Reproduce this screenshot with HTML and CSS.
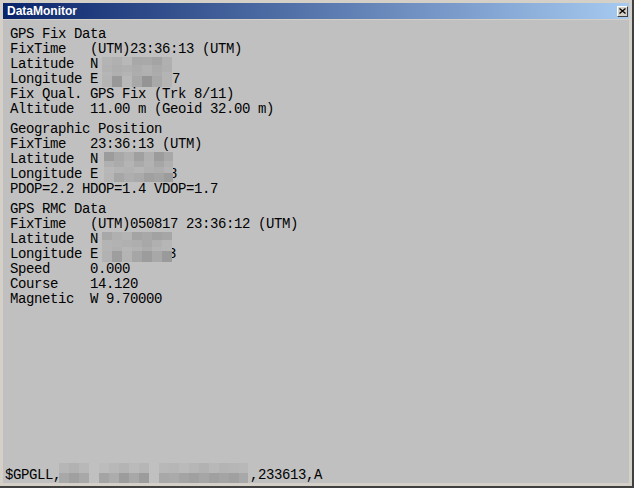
FILE: index.html
```html
<!DOCTYPE html>
<html>
<head>
<meta charset="utf-8">
<link rel="stylesheet" href="styles.css">
</head>
<body>
<div class="window">
  <div class="titlebar">
    <span class="title">DataMonitor</span>
    <span class="close"><svg width="7" height="6" viewBox="0 0 7 6"><path d="M0.5 0.5 L6.5 5.5 M6.5 0.5 L0.5 5.5" stroke="#000" stroke-width="1.3"/></svg></span>
  </div>
  <div class="content">
    <div class="section">
      <div class="line">GPS Fix Data</div>
      <div class="line">FixTime   (UTM)23:36:13 (UTM)</div>
      <div class="line">Latitude  N<span class="blur b1"></span></div>
      <div class="line">Longitude E<span class="blur b2"></span>7</div>
      <div class="line">Fix Qual. GPS Fix (Trk 8/11)</div>
      <div class="line">Altitude  11.00 m (Geoid 32.00 m)</div>
    </div>
    <div class="section">
      <div class="line">Geographic Position</div>
      <div class="line">FixTime   23:36:13 (UTM)</div>
      <div class="line">Latitude  N<span class="blur b3 shift"></span></div>
      <div class="line">Longitude E<span class="blur b4 shift over"></span>8</div>
      <div class="line">PDOP=2.2 HDOP=1.4 VDOP=1.7</div>
    </div>
    <div class="section">
      <div class="line">GPS RMC Data</div>
      <div class="line">FixTime   (UTM)050817 23:36:12 (UTM)</div>
      <div class="line">Latitude  N<span class="blur b5"></span></div>
      <div class="line">Longitude E<span class="blur b6 over"></span>3</div>
      <div class="line">Speed     0.000</div>
      <div class="line">Course    14.120</div>
      <div class="line">Magnetic  W 9.70000</div>
    </div>
    <div class="status">$GPGLL,<span class="blur bw"></span>,233613,A</div>
  </div>
</div>
</body>
</html>
```
FILE: styles.css
```css
html, body {
  margin: 0;
  padding: 0;
  background: #c0c0c0;
}
.window {
  width: 634px;
  height: 488px;
  box-sizing: border-box;
  background: #d4d0c8;
  border-right: 2px solid #404040;
  border-bottom: 2px solid #404040;
  padding: 3px;
  display: flex;
  flex-direction: column;
}
.titlebar {
  height: 16px;
  flex: none;
  margin-bottom: 1px;
  background: linear-gradient(90deg, #0a246a 0%, #a6caf0 100%);
  display: flex;
  align-items: center;
  justify-content: space-between;
  padding-left: 4px;
  padding-right: 1px;
}
.title {
  font-family: "Liberation Sans", Arial, sans-serif;
  font-weight: bold;
  font-size: 12px;
  color: #fff;
  line-height: 16px;
}
.close {
  width: 11px;
  height: 11px;
  box-sizing: border-box;
  background: #d4d0c8;
  border-top: 1px solid #fff;
  border-left: 1px solid #fff;
  border-right: 1px solid #404040;
  border-bottom: 1px solid #404040;
  display: flex;
  align-items: center;
  justify-content: center;
}
.close svg { display: block; }
.content {
  flex: 1;
  background: #c0c0c0;
  padding: 7px 0 0 7px;
  display: flex;
  flex-direction: column;
  gap: 5px;
  font-family: "Liberation Mono", "Courier New", monospace;
  font-size: 14px;
  letter-spacing: -0.4px;
  color: #000;
}
.line, .status {
  white-space: pre;
  line-height: 15px;
  height: 15px;
}
.status {
  margin-top: auto;
  margin-left: -5px;
}
.blur {
  display: inline-block;
  vertical-align: top;
  width: 70px;
  height: 15px;
  margin-left: 4px;
}
.blur.shift { margin-left: 6px; width: 69px; }
.blur.over {
  position: relative;
  z-index: 1;
  margin-right: -4px;
}
.b1 {
  background:
    linear-gradient(90deg, #b4b4b4 0 10px, #b0b0b0 10px 20px, #b8b8b8 20px 30px, #a8a8a8 30px 40px, #a9a9a9 40px 50px, #a4a4a4 50px 60px, #b0b0b0 60px 70px) top / 100% 8px no-repeat,
    linear-gradient(90deg, #b2b2b2 0 10px, #aeaeae 10px 20px, #b0b0b0 20px 30px, #acacac 30px 40px, #b1b1b1 40px 50px, #aaaaaa 50px 60px, #afafaf 60px 70px) bottom / 100% 7px no-repeat;
}
.b2 {
  background:
    linear-gradient(90deg, #b6b6b6 0 10px, #b0b0b0 10px 20px, #b4b4b4 20px 30px, #adadad 30px 40px, #b0b0b0 40px 50px, #acacac 50px 60px, #b4b4b4 60px 70px) top / 100% 4px no-repeat,
    linear-gradient(90deg, #b4b4b4 0 10px, #989898 10px 20px, #b8b8b8 20px 30px, #a8a8a8 30px 40px, #949494 40px 50px, #a8a8a8 50px 60px, #b4b4b4 60px 70px) bottom / 100% 11px no-repeat;
}
.b3 {
  background:
    linear-gradient(90deg, #9c9c9c 0 10px, #a8a8a8 10px 20px, #b0b0b0 20px 30px, #a0a0a0 30px 40px, #b0b0b0 40px 50px, #9c9c9c 50px 60px, #a8a8a8 60px 69px) top / 100% 9px no-repeat,
    linear-gradient(90deg, #b0b0b0 0 10px, #ababab 10px 20px, #b4b4b4 20px 30px, #aaaaaa 30px 40px, #b2b2b2 40px 50px, #a6a6a6 50px 60px, #b0b0b0 60px 69px) bottom / 100% 6px no-repeat;
}
.b4 {
  background:
    linear-gradient(90deg, #b8b8b8 0 10px, #b4b4b4 10px 20px, #b2b2b2 20px 30px, #b6b6b6 30px 40px, #b0b0b0 40px 50px, #aeaeae 50px 60px, #b4b4b4 60px 69px) top / 100% 6px no-repeat,
    linear-gradient(90deg, #b6b6b6 0 10px, #a6a6a6 10px 20px, #aeaeae 20px 30px, #aaaaaa 30px 40px, #a0a0a0 40px 50px, #a4a4a4 50px 60px, #9c9c9c 60px 69px) bottom / 100% 9px no-repeat;
}
.b5 {
  background:
    linear-gradient(90deg, #a8a8a8 0 10px, #b0b0b0 10px 20px, #b4b4b4 20px 30px, #a4a4a4 30px 40px, #a8a8a8 40px 50px, #a2a2a2 50px 60px, #a6a6a6 60px 70px) top / 100% 8px no-repeat,
    linear-gradient(90deg, #b4b4b4 0 10px, #b2b2b2 10px 20px, #b0b0b0 20px 30px, #aeaeae 30px 40px, #a8a8a8 40px 50px, #b0b0b0 50px 60px, #b6b6b6 60px 70px) bottom / 100% 7px no-repeat;
}
.b6 {
  background:
    linear-gradient(90deg, #b4b4b4 0 10px, #b0b0b0 10px 20px, #b6b6b6 20px 30px, #b2b2b2 30px 40px, #acacac 40px 50px, #b4b4b4 50px 60px, #b6b6b6 60px 70px) top / 100% 4px no-repeat,
    linear-gradient(90deg, #b2b2b2 0 10px, #9e9e9e 10px 20px, #b4b4b4 20px 30px, #a6a6a6 30px 40px, #9c9c9c 40px 50px, #a8a8a8 50px 60px, #9a9a9a 60px 70px) bottom / 100% 11px no-repeat;
}
.bw {
  width: 191px;
  margin-left: -2px;
  margin-top: -5px;
  height: 20px;
  background:
    linear-gradient(90deg, #b6b6b6 0 10px, #b2b2b2 10px 20px, #b8b8b8 20px 30px, #c0c0c0 30px 40px, #bcbcbc 40px 50px, #b8b8b8 50px 60px, #b4b4b4 60px 70px, #bababa 70px 80px, #b6b6b6 80px 90px, #c0c0c0 90px 100px, #b8b8b8 100px 110px, #b6b6b6 110px 120px, #bababa 120px 130px, #b6b6b6 130px 140px, #b2b2b2 140px 150px, #b8b8b8 150px 160px, #b4b4b4 160px 170px, #b6b6b6 170px 180px, #b8b8b8 180px 189px, #c0c0c0 189px 191px) top / 100% 10px no-repeat,
    linear-gradient(90deg, #a8a8a8 0 10px, #a0a0a0 10px 20px, #a8a8a8 20px 30px, #c0c0c0 30px 40px, #a4a4a4 40px 50px, #acacac 50px 60px, #9c9c9c 60px 70px, #a8a8a8 70px 80px, #9c9c9c 80px 90px, #c0c0c0 90px 100px, #a8a8a8 100px 110px, #aaaaaa 110px 120px, #a4a4a4 120px 130px, #a0a0a0 130px 140px, #a6a6a6 140px 150px, #a0a0a0 150px 160px, #a4a4a4 160px 170px, #a0a0a0 170px 180px, #a8a8a8 180px 189px, #c0c0c0 189px 191px) bottom / 100% 10px no-repeat;
}
```
